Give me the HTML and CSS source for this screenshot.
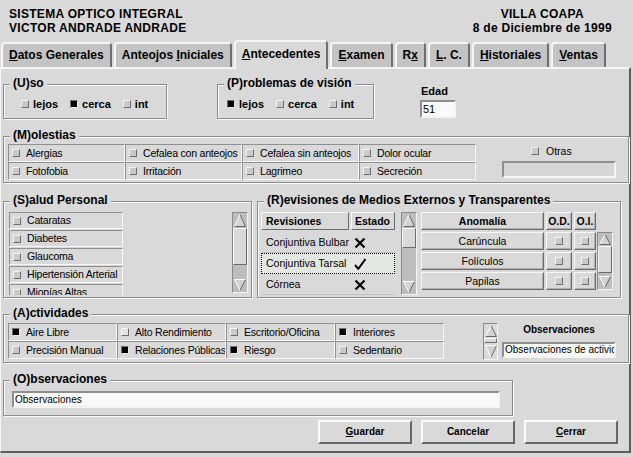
FILE: index.html
```html
<!DOCTYPE html>
<html lang="es">
<head>
<meta charset="utf-8">
<title>Sistema Optico Integral - Antecedentes</title>
<link rel="stylesheet" href="styles.css">
</head>
<body>
<header class="header">
  <div class="org">
    <div>SISTEMA OPTICO INTEGRAL</div>
    <div>VICTOR ANDRADE ANDRADE</div>
  </div>
  <div class="place">
    <div>VILLA COAPA</div>
    <div>8 de Diciembre de 1999</div>
  </div>
</header>

<nav class="tabs">
  <div class="tab"><u>D</u>atos Generales</div>
  <div class="tab">Anteojos <u>I</u>niciales</div>
  <div class="tab active"><u>A</u>ntecedentes</div>
  <div class="tab"><u>E</u>xamen</div>
  <div class="tab">R<u>x</u></div>
  <div class="tab"><u>L</u>. C.</div>
  <div class="tab"><u>H</u>istoriales</div>
  <div class="tab"><u>V</u>entas</div>
</nav>

<main class="panel">
  <section class="row">
    <fieldset class="frame uso">
      <legend>(U)so</legend>
      <div class="opts">
        <span class="opt"><i class="ind"></i>lejos</span>
        <span class="opt"><i class="ind on"></i>cerca</span>
        <span class="opt"><i class="ind"></i>int</span>
      </div>
    </fieldset>
    <fieldset class="frame vision">
      <legend>(P)roblemas de visión</legend>
      <div class="opts">
        <span class="opt"><i class="ind on"></i>lejos</span>
        <span class="opt"><i class="ind"></i>cerca</span>
        <span class="opt"><i class="ind"></i>int</span>
      </div>
    </fieldset>
    <div class="edad">
      <div class="edad-label">Edad</div>
      <div class="entry edad-entry">51</div>
    </div>
  </section>

  <fieldset class="frame molestias">
    <legend>(M)olestias</legend>
    <div class="mol-body">
      <div class="cells cells-mol">
        <div class="cell"><i class="ind"></i>Alergias</div>
        <div class="cell"><i class="ind"></i>Cefalea con anteojos</div>
        <div class="cell"><i class="ind"></i>Cefalea sin anteojos</div>
        <div class="cell"><i class="ind"></i>Dolor ocular</div>
        <div class="cell"><i class="ind"></i>Fotofobia</div>
        <div class="cell"><i class="ind"></i>Irritación</div>
        <div class="cell"><i class="ind"></i>Lagrimeo</div>
        <div class="cell"><i class="ind"></i>Secreción</div>
      </div>
      <div class="otras">
        <div class="otras-check"><i class="ind"></i>Otras</div>
        <div class="entry entry-off"></div>
      </div>
    </div>
  </fieldset>

  <section class="row row-3">
    <fieldset class="frame salud">
      <legend>(S)alud Personal</legend>
      <div class="salud-body">
        <div class="list">
          <div class="cell"><i class="ind"></i>Cataratas</div>
          <div class="cell"><i class="ind"></i>Diabetes</div>
          <div class="cell"><i class="ind"></i>Glaucoma</div>
          <div class="cell"><i class="ind"></i>Hipertensión Arterial</div>
          <div class="cell"><i class="ind"></i>Miopías Altas</div>
        </div>
        <div class="sb sb-salud">
          <svg class="arr" width="14" height="15" viewBox="0 0 14 15"><path d="M7 1.5 L12.5 13.5 H1.5 Z" fill="#d2d2d2"/><path d="M7 1.5 L12.5 13.5 H1.5" fill="none" stroke="#6a6a6a"/><path d="M1.5 13.5 L7 1.5" fill="none" stroke="#fff"/></svg>
          <div class="thumb"></div>
          <div class="trough"></div>
          <svg class="arr" width="14" height="14" viewBox="0 0 14 14"><path d="M1.5 1.5 H12.5 L7 12.5 Z" fill="#d2d2d2"/><path d="M7 12.5 L12.5 1.5" fill="none" stroke="#6a6a6a"/><path d="M7 12.5 L1.5 1.5 H12.5" fill="none" stroke="#fff"/></svg>
        </div>
      </div>
    </fieldset>

    <fieldset class="frame revisiones">
      <legend>(R)evisiones de Medios Externos y Transparentes</legend>
      <div class="rev-body">
        <div class="estado-table">
          <div class="thead">
            <div class="th th-rev">Revisiones</div>
            <div class="th th-est">Estado</div>
          </div>
          <div class="tr first">
            <span class="td-name">Conjuntiva Bulbar</span>
            <svg class="mark" width="12" height="12" viewBox="0 0 12 12"><path d="M1.5 1.5 L10.5 10.5 M10.5 1.5 L1.5 10.5" stroke="#000" stroke-width="2.2" fill="none"/></svg>
          </div>
          <div class="tr focus">
            <span class="td-name">Conjuntiva Tarsal</span>
            <svg class="mark" width="12" height="12" viewBox="0 0 12 12"><path d="M1 7 L4.3 10.8 L11.5 1" stroke="#000" stroke-width="2" fill="none"/></svg>
          </div>
          <div class="tr">
            <span class="td-name">Córnea</span>
            <svg class="mark" width="12" height="12" viewBox="0 0 12 12"><path d="M1.5 1.5 L10.5 10.5 M10.5 1.5 L1.5 10.5" stroke="#000" stroke-width="2.2" fill="none"/></svg>
          </div>
        </div>
        <div class="sb sb-rev">
          <svg class="arr" width="14" height="15" viewBox="0 0 14 15"><path d="M7 1.5 L12.5 13.5 H1.5 Z" fill="#d2d2d2"/><path d="M7 1.5 L12.5 13.5 H1.5" fill="none" stroke="#6a6a6a"/><path d="M1.5 13.5 L7 1.5" fill="none" stroke="#fff"/></svg>
          <div class="thumb"></div>
          <div class="trough"></div>
          <svg class="arr" width="14" height="14" viewBox="0 0 14 14"><path d="M1.5 1.5 H12.5 L7 12.5 Z" fill="#d2d2d2"/><path d="M7 12.5 L12.5 1.5" fill="none" stroke="#6a6a6a"/><path d="M7 12.5 L1.5 1.5 H12.5" fill="none" stroke="#fff"/></svg>
        </div>
        <div class="anom">
          <div class="raised th-c">Anomalía</div>
          <div class="raised th-c">O.D.</div>
          <div class="raised th-c">O.I.</div>
          <div class="raised">Carúncula</div>
          <div class="raised"><i class="ind"></i></div>
          <div class="raised"><i class="ind"></i></div>
          <div class="raised">Folículos</div>
          <div class="raised"><i class="ind"></i></div>
          <div class="raised"><i class="ind"></i></div>
          <div class="raised">Papilas</div>
          <div class="raised"><i class="ind"></i></div>
          <div class="raised"><i class="ind"></i></div>
        </div>
        <div class="sb sb-anom">
          <svg class="arr" width="14" height="13" viewBox="0 0 14 13"><path d="M7 1.5 L12.5 11.5 H1.5 Z" fill="#d2d2d2"/><path d="M7 1.5 L12.5 11.5 H1.5" fill="none" stroke="#6a6a6a"/><path d="M1.5 11.5 L7 1.5" fill="none" stroke="#fff"/></svg>
          <div class="thumb"></div>
          <div class="trough"></div>
          <svg class="arr" width="14" height="14" viewBox="0 0 14 14"><path d="M1.5 1.5 H12.5 L7 12.5 Z" fill="#d2d2d2"/><path d="M7 12.5 L12.5 1.5" fill="none" stroke="#6a6a6a"/><path d="M7 12.5 L1.5 1.5 H12.5" fill="none" stroke="#fff"/></svg>
        </div>
      </div>
    </fieldset>
  </section>

  <fieldset class="frame actividades">
    <legend>(A)ctividades</legend>
    <div class="act-body">
      <div class="cells cells-act">
        <div class="cell"><i class="ind on"></i>Aire Libre</div>
        <div class="cell"><i class="ind light"></i>Alto Rendimiento</div>
        <div class="cell"><i class="ind"></i>Escritorio/Oficina</div>
        <div class="cell"><i class="ind on"></i>Interiores</div>
        <div class="cell"><i class="ind"></i>Precisión Manual</div>
        <div class="cell"><i class="ind on"></i>Relaciones Públicas</div>
        <div class="cell"><i class="ind on"></i>Riesgo</div>
        <div class="cell"><i class="ind"></i>Sedentario</div>
      </div>
      <div class="sb sb-spin">
        <svg class="arr" width="14" height="14" viewBox="0 0 14 14"><path d="M7 1.5 L12.5 12.5 H1.5 Z" fill="#d2d2d2"/><path d="M7 1.5 L12.5 12.5 H1.5" fill="none" stroke="#6a6a6a"/><path d="M1.5 12.5 L7 1.5" fill="none" stroke="#fff"/></svg>
        <div class="thumb"></div>
        <div class="trough"></div>
        <svg class="arr" width="14" height="15" viewBox="0 0 14 15"><path d="M1.5 1.5 H12.5 L7 13.5 Z" fill="#d2d2d2"/><path d="M7 13.5 L12.5 1.5" fill="none" stroke="#6a6a6a"/><path d="M7 13.5 L1.5 1.5 H12.5" fill="none" stroke="#fff"/></svg>
      </div>
      <div class="obs-act">
        <div class="obs-title">Observaciones</div>
        <div class="entry obs-entry">Observaciones de actividades</div>
      </div>
    </div>
  </fieldset>

  <fieldset class="frame observaciones">
    <legend>(O)bservaciones</legend>
    <div class="obs-body">
      <div class="entry obs-main">Observaciones</div>
    </div>
  </fieldset>

  <div class="actions">
    <button class="btn" type="button"><u>G</u>uardar</button>
    <button class="btn" type="button">Cancelar</button>
    <button class="btn" type="button"><u>C</u>errar</button>
  </div>
</main>
</body>
</html>
```

FILE: styles.css
```css
* { box-sizing: border-box; }

html, body { margin: 0; padding: 0; }

body {
  width: 633px;
  height: 457px;
  overflow: hidden;
  background: #d9d9d9;
  color: #000;
  font-family: "Liberation Sans", Arial, Helvetica, sans-serif;
  font-size: 10.5px;
  line-height: 1;
}

u {
  text-decoration: underline;
  text-decoration-thickness: 1px;
  text-underline-offset: 1px;
}

/* ---- title block ---- */
.header {
  display: flex;
  justify-content: space-between;
  height: 40px;
  padding: 7px 21px 0 9px;
  font-size: 12px;
  font-weight: bold;
  line-height: 14px;
  letter-spacing: 0.3px;
}

.place { text-align: center; }

/* ---- notebook tabs ---- */
.tabs {
  display: flex;
  align-items: flex-end;
  gap: 2px;
  height: 27px;
  padding-left: 1px;
}

.tab {
  height: 25px;
  padding: 0 6px;
  border: 2px solid;
  border-bottom: 0;
  border-color: #f6f6f6 #6f6f6f #6f6f6f #f6f6f6;
  border-radius: 4px 4px 0 0;
  background: #c4c4c4;
  font-size: 12px;
  font-weight: bold;
  line-height: 22px;
  white-space: nowrap;
}

.tab.active {
  position: relative;
  z-index: 1;
  height: 29px;
  margin-bottom: -2px;
  background: #d9d9d9;
  line-height: 24px;
}

/* ---- page body ---- */
.panel {
  display: flex;
  flex-direction: column;
  width: 631px;
  height: 386px;
  padding: 7px 0 0 2px;
  border-style: solid;
  border-width: 2px 2px 2px 1px;
  border-color: #f6f6f6 #5e5e5e #5e5e5e #f6f6f6;
}

.row {
  display: flex;
  align-items: flex-start;
  flex: none;
}

/* etched label frames */
.frame {
  flex: none;
  margin: 0;
  padding: 0;
  min-width: 0;
  border: 1px solid #8c8c8c;
  box-shadow: inset 1px 1px 0 #fbfbfb, 1px 1px 0 #fbfbfb;
}

.frame > legend {
  margin-left: 6px;
  padding: 0 3px 2px;
  background: #d9d9d9;
  font-size: 12px;
  font-weight: bold;
  line-height: 14px;
  white-space: nowrap;
}

/* check indicators */
.ind {
  flex: none;
  display: block;
  width: 8px;
  height: 8px;
  border: 1px solid;
  border-color: #f4f4f4 #6e6e6e #6e6e6e #f4f4f4;
  background: #c9c9c9;
}

.ind.light { background: #e4e4e4; }

.ind.on {
  background: #000;
  border-color: #6e6e6e #e8e8e8 #e8e8e8 #6e6e6e;
}

/* text entries */
.entry {
  border: 2px solid;
  border-color: #8e8e8e #f4f4f4 #f4f4f4 #8e8e8e;
  background: #f8fbf8;
  padding-left: 1px;
  font-size: 10px;
  line-height: 13px;
  white-space: nowrap;
  overflow: hidden;
}

/* ---- Uso / Problemas / Edad ---- */
.uso { width: 164px; height: 43px; }

.vision { width: 157px; height: 43px; margin-left: 50px; }

.opts {
  display: flex;
  gap: 12px;
  padding-top: 5px;
  font-size: 11px;
  font-weight: bold;
  line-height: 14px;
}

.uso .opts { padding-left: 17px; }
.vision .opts { padding-left: 9px; }

.opt {
  display: flex;
  align-items: center;
  gap: 4px;
}

.edad { margin: 9px 0 0 46px; }

.edad-label {
  padding-left: 1px;
  font-size: 11px;
  font-weight: bold;
  line-height: 13px;
}

.edad-entry {
  width: 36px;
  height: 18px;
  margin-top: 2px;
  font-size: 11px;
  line-height: 14px;
}

/* ---- checkbox grids ---- */
.cells {
  display: grid;
  grid-auto-rows: 18px;
}

.cell {
  display: flex;
  align-items: center;
  gap: 6px;
  padding-left: 3px;
  border: 1px solid;
  border-color: #8f8f8f #f7f7f7 #f7f7f7 #8f8f8f;
  font-size: 10.5px;
  letter-spacing: -0.2px;
  white-space: nowrap;
  overflow: hidden;
}

.molestias { height: 55px; margin-top: 9px; }

.mol-body {
  display: flex;
  padding-left: 4px;
}

.cells-mol { grid-template-columns: repeat(4, 117px); }

.otras { width: 114px; margin-left: 26px; }

.otras-check {
  display: flex;
  align-items: center;
  gap: 7px;
  height: 14px;
  padding-left: 29px;
}

.entry-off {
  height: 17px;
  margin-top: 3px;
  background: #d6d6d6;
}

/* ---- Salud / Revisiones ---- */
.row-3 { margin-top: 10px; }

.salud { width: 249px; height: 105px; }

.revisiones { width: 364px; height: 105px; margin-left: 5px; }

.salud-body {
  display: flex;
  justify-content: space-between;
  padding: 3px 3px 0 5px;
}

.list {
  display: flex;
  flex-direction: column;
  gap: 1px;
  width: 114px;
  height: 83px;
  overflow: hidden;
}

.list .cell { flex: none; height: 17px; }

/* Motif style scrollbars */
.sb {
  display: flex;
  flex-direction: column;
  flex: none;
  width: 16px;
  border: 1px solid;
  border-color: #8a8a8a #f4f4f4 #f4f4f4 #8a8a8a;
  background: #bdbdbd;
}

.sb .arr { display: block; flex: none; }

.sb .thumb {
  flex: none;
  border: 1px solid;
  border-color: #f7f7f7 #6b6b6b #6b6b6b #f7f7f7;
  background: #d9d9d9;
}

.sb .trough { flex: 1; }

.sb-salud { height: 81px; }
.sb-salud .thumb { height: 37px; }

.sb-rev { height: 83px; margin-left: 6px; }
.sb-rev .thumb { height: 20px; }

.sb-anom { height: 58px; margin: 20px 0 0 1px; }
.sb-anom .thumb { height: 27px; }

.sb-spin { width: 15px; height: 37px; margin-left: 39px; background: #d9d9d9; }
.sb-spin .thumb { height: 5px; }

.rev-body {
  display: flex;
  align-items: flex-start;
  padding: 3px 0 0 3px;
}

.estado-table {
  width: 134px;
  height: 83px;
  overflow: hidden;
}

.thead {
  display: flex;
  gap: 2px;
  height: 18px;
}

.th {
  border: 1px solid;
  border-color: #f7f7f7 #6b6b6b #6b6b6b #f7f7f7;
  font-weight: bold;
  line-height: 16px;
  padding-left: 4px;
}

.th-rev { width: 88px; }
.th-est { width: 44px; padding-left: 3px; }

.tr {
  display: flex;
  align-items: center;
  height: 21px;
  border: 1px solid transparent;
  border-bottom-color: #c2c2c2;
}

.tr.first { margin-top: 2px; }

.tr.focus {
  background: #e3e8e3;
  border: 1px dotted #000;
}

.td-name {
  width: 92px;
  padding-left: 4px;
  white-space: nowrap;
}

.mark { display: block; flex: none; }

.anom {
  display: grid;
  grid-template-columns: 123px 26px 22px;
  grid-auto-rows: 18px;
  gap: 2px;
  margin-left: 4px;
}

.raised {
  display: flex;
  align-items: center;
  justify-content: center;
  border: 1px solid;
  border-color: #f7f7f7 #6b6b6b #6b6b6b #f7f7f7;
  box-shadow: inset -1px -1px 0 #b0b0b0;
  white-space: nowrap;
}

.th-c { font-weight: bold; }

/* ---- Actividades ---- */
.actividades { height: 57px; margin-top: 8px; }

.act-body {
  display: flex;
  align-items: flex-start;
  padding: 1px 0 0 4px;
}

.cells-act { grid-template-columns: repeat(4, 109px); }

.obs-act { width: 114px; margin-left: 4px; }

.obs-title {
  text-align: center;
  font-size: 10px;
  font-weight: bold;
  line-height: 14px;
}

.obs-entry {
  height: 16px;
  margin-top: 5px;
  line-height: 12px;
}

/* ---- Observaciones ---- */
.observaciones { width: 510px; height: 44px; margin-top: 9px; }

.obs-body { padding: 3px 0 0 8px; }

.obs-main { width: 488px; height: 17px; }

/* ---- buttons ---- */
.actions {
  display: flex;
  justify-content: flex-end;
  gap: 9px;
  margin-top: 4px;
  padding-right: 11px;
}

.btn {
  width: 94px;
  height: 24px;
  margin: 0;
  padding: 0;
  border: 2px solid;
  border-color: #fbfbfb #666 #666 #fbfbfb;
  background: #d9d9d9;
  color: #000;
  font-family: "Liberation Sans", Arial, sans-serif;
  font-size: 10px;
  font-weight: bold;
  line-height: 20px;
  text-align: center;
}
```
